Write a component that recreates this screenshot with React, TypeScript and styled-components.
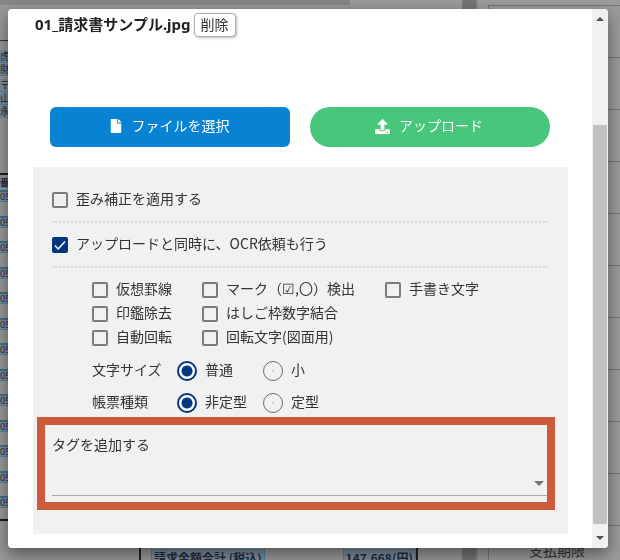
import React from "react";
import styled, { createGlobalStyle, css } from "styled-components";
import { FaFile, FaUpload } from "react-icons/fa";

const navy = "#003580";
const ink = "#333";

const GlobalStyle = createGlobalStyle`
  * { box-sizing: border-box; }
  body {
    margin: 0;
    overflow: hidden;
    background: #999;
    color: ${ink};
    font: 14px/20px "Noto Sans CJK JP", "Noto Sans", sans-serif;
  }
  button, input, select { font: inherit; color: inherit; margin: 0; }
`;

/* Page behind the dialog */
const Backdrop = styled.div`
  display: flex;
  height: 100vh;
  overflow: hidden;
  background: #9b9b9b;
`;

const Viewer = styled.div`
  flex: 1;
  min-width: 0;
  display: flex;
  flex-direction: column;
`;

const ViewerBar = styled.div`
  flex: none;
  height: 5px;
  border-right: 112px solid #9b9b9b;
  background: #868686;
`;

const Divider = styled.div`
  width: 14px;
  background: #757575;
`;

const SidePanel = styled.div`
  width: 144px;
  padding: 5px 0 0 10px;
  border-left: 2px solid #8a8a8a;
`;

const SideCells = styled.div`
  border: 1px solid #777;
  border-right: 0;
`;

const SideCell = styled.div`
  height: 52px;
  padding: 14px 0 0 40px;
  border-bottom: 1px solid #777;
  white-space: nowrap;
`;

const Paper = styled.div`
  flex: 1;
  display: flex;
  flex-direction: column;
  color: #222b3c;
  background: #989898;
`;

const Address = styled.div`
  height: 135px;
  margin-top: 35px;
  padding-top: 9px;
  border-top: 1px solid #333;
  border-bottom: 2px solid #1b1b1b;
  font-size: 10px;
  line-height: 12px;
`;

const AddressLine = styled.div`
  background: #7d8c9b;
  border-bottom: 1px solid #4a86a8;
  white-space: nowrap;
  &:nth-of-type(3) { margin-top: 3px; }
`;

const Lines = styled.div`
  display: flex;
  flex-direction: column;
  gap: 2px;
  padding: 3px 0 11px;
  height: 346px;
  border-bottom: 2px solid #1b1b1b;
`;

const LineHead = styled.div`
  flex: none;
  height: 10px;
  background: #7f8b96;
  font-size: 9px;
  line-height: 10px;
  font-weight: 700;
`;

const LineCodes = styled.div`
  flex: 1;
  display: flex;
  flex-direction: column;
  justify-content: space-between;
`;

const LineCode = styled.div`
  height: 12px;
  border-top: 2px solid #40718c;
  border-bottom: 1px solid #4a86a8;
  background: #7f8d9d;
  font: 9px/9px "Noto Sans", sans-serif;
`;

const Totals = styled.div`
  flex: 1;
  display: flex;
  align-items: flex-start;
  justify-content: space-between;
  margin: 0 44px 0 139px;
  padding: 28px 0 0 10px;
  border: solid #222;
  border-width: 0 2px;
  font-weight: 700;
  font-size: 12px;
  white-space: nowrap;
`;

const Mark = styled.span`
  height: 24px;
  padding: 0 2px;
  border: 1px solid #4a86a8;
  background: #808c99;
  line-height: 16px;
`;

/* Dialog */
const Dialog = styled.section`
  position: fixed;
  inset: 9px 12px 12px 8px;
  display: flex;
  overflow: hidden;
  border-radius: 4px;
  background: #fff;
  box-shadow: 0 6px 16px rgba(0, 0, 0, 0.45);
`;

const Content = styled.div`
  flex: 1;
  min-width: 0;
  padding: 4px 24px 14px 25px;
`;

const FileRow = styled.div`
  display: flex;
  align-items: center;
  gap: 3px;
  padding-left: 2px;
`;

const FileName = styled.h1`
  margin: 0;
  padding-bottom: 2px;
  color: #222;
  font: 700 15px/22px "Noto Sans", "Noto Sans CJK JP", sans-serif;
`;

const DeleteButton = styled.button`
  height: 24px;
  padding: 0 6px 2px;
  border: 1px solid #aaa;
  border-radius: 4px;
  background: #fff;
  box-shadow: 1px 1px 3px rgba(0, 0, 0, 0.25);
  line-height: 20px;
`;

const Actions = styled.div`
  display: flex;
  gap: 20px;
  margin: 70px 18px 20px 17px;
`;

const ActionButton = styled.button<{ $tone: "blue" | "green" }>`
  flex: 1;
  display: flex;
  align-items: center;
  justify-content: center;
  gap: 9px;
  height: 40px;
  padding: 0 2px 2px 0;
  border: 0;
  color: #fff;
  ${(p) =>
    p.$tone === "blue"
      ? css`background: #0882d3; border-radius: 6px;`
      : css`background: #48c77c; border-radius: 20px;`}
`;

const ChoiceText = styled.span`
  padding-bottom: 4px;
`;

const ActionText = styled.span`
  padding-bottom: 2px;
`;

const Options = styled.form`
  padding: 11px 0 24px;
  background: #f1f1f1;
`;

const OptionRow = styled.div`
  display: flex;
  align-items: center;
  height: 45px;
  margin: 0 20px 0 19px;
  border-bottom: 2px dotted #d9d9d9;
`;

const Choice = styled.label`
  display: flex;
  align-items: center;
  gap: 8px;
  white-space: nowrap;
`;

const CheckBox = styled.input.attrs({ type: "checkbox" })`
  appearance: none;
  flex: none;
  width: 16px;
  height: 16px;
  border: 2px solid #7c7c7c;
  border-radius: 2px;
  &:checked {
    border-color: ${navy};
    background: ${navy}
      url("data:image/svg+xml,%3Csvg xmlns='http://www.w3.org/2000/svg' viewBox='0 0 12 12'%3E%3Cpath d='M1 6.6 4.2 9.9 11 2.4' fill='none' stroke='white' stroke-width='1.5'/%3E%3C/svg%3E")
      center / 12px no-repeat;
  }
`;

const Radio = styled.input.attrs({ type: "radio" })`
  appearance: none;
  flex: none;
  width: 20px;
  height: 20px;
  border: 1px solid #6c6c6c;
  border-radius: 50%;
  background: radial-gradient(circle, #ccc 0 1px, transparent 1px);
  &:checked {
    border: 2px solid ${navy};
    background: radial-gradient(circle, ${navy} 0 5px, #fff 6px);
  }
`;

const CheckGrid = styled.div`
  display: grid;
  grid-template-columns: 110px 183px 1fr;
  grid-auto-rows: 24px;
  padding: 10px 20px 0 59px;
`;

const RadioRows = styled.div`
  display: grid;
  gap: 8px;
  padding: 9px 20px 2px 59px;
`;

const RadioRow = styled.div`
  display: grid;
  grid-template-columns: 85px 86px 1fr;
  align-items: center;
  height: 24px;
`;

const TagField = styled.div`
  display: flex;
  flex-direction: column;
  margin: 0 13px 0 4px;
  padding: 9px 0 6px 7px;
  border: 8px solid #cd5a3b;
`;

const TagSelectWrap = styled.div`
  display: grid;
  align-items: center;
  margin-top: 17px;
  > * { grid-area: 1 / 1; }
`;

const TagSelect = styled.select`
  appearance: none;
  width: 100%;
  height: 25px;
  border: 0;
  border-bottom: 1px solid #aaa;
  border-radius: 0;
  background: transparent;
`;

const Arrow = styled.svg`
  justify-self: end;
  margin-right: 3px;
  pointer-events: none;
`;

const ScrollTrack = styled.div`
  width: 16px;
  display: flex;
  flex-direction: column;
  align-items: center;
  background: #f1f1f1;
`;

const ScrollButton = styled.button`
  display: grid;
  place-items: center;
  width: 16px;
  height: 20px;
  padding: 0;
  border: 0;
  background: none;
`;

const ScrollThumb = styled.div`
  flex: 1;
  width: 14px;
  margin: 96px 0 4px;
  background: #c1c1c1;
`;

const Check = ({ label, checked }: { label: string; checked?: boolean }) => (
  <Choice>
    <CheckBox defaultChecked={checked} />
    <ChoiceText>{label}</ChoiceText>
  </Choice>
);

const RadioGroup = ({ name, title, options }: { name: string; title: string; options: string[] }) => (
  <RadioRow role="radiogroup" aria-label={title}>
    <ChoiceText>{title}</ChoiceText>
    {options.map((o, i) => (
      <Choice key={o}>
        <Radio name={name} defaultChecked={i === 0} />
        <ChoiceText>{o}</ChoiceText>
      </Choice>
    ))}
  </RadioRow>
);

export default function App() {
  return (
    <>
      <GlobalStyle />
      <Backdrop aria-hidden="true">
        <Viewer>
          <ViewerBar />
          <Paper>
            <Address>
              {["虎", "財", "〒9", "山", "永"].map((t) => (
                <AddressLine key={t}>{t}</AddressLine>
              ))}
            </Address>
            <Lines>
              <LineHead>番</LineHead>
              <LineCodes>
                {Array.from({ length: 13 }, (_, i) => (
                  <LineCode key={i}>050</LineCode>
                ))}
              </LineCodes>
            </Lines>
            <Totals>
              <Mark>請求金額合計 (税込)</Mark>
              <Mark>147,668(円)</Mark>
            </Totals>
          </Paper>
        </Viewer>
        <Divider />
        <SidePanel>
          <SideCells>
            {Array.from({ length: 10 }, (_, i) => (
              <SideCell key={i} />
            ))}
            <SideCell>支払期限</SideCell>
          </SideCells>
        </SidePanel>
      </Backdrop>

      <Dialog role="dialog" aria-label="アップロード">
        <Content>
          <FileRow>
            <FileName>01_請求書サンプル.jpg</FileName>
            <DeleteButton type="button">削除</DeleteButton>
          </FileRow>
          <Actions>
            <ActionButton type="button" $tone="blue">
              <FaFile size={14} />
              <ActionText>ファイルを選択</ActionText>
            </ActionButton>
            <ActionButton type="button" $tone="green">
              <FaUpload size={15} />
              <ActionText>アップロード</ActionText>
            </ActionButton>
          </Actions>
          <Options>
            <OptionRow>
              <Check label="歪み補正を適用する" />
            </OptionRow>
            <OptionRow>
              <Check label="アップロードと同時に、OCR依頼も行う" checked />
            </OptionRow>
            <CheckGrid>
              <Check label="仮想罫線" />
              <Check label="マーク（☑,〇）検出" />
              <Check label="手書き文字" />
              <Check label="印鑑除去" />
              <Check label="はしご枠数字結合" />
              <span />
              <Check label="自動回転" />
              <Check label="回転文字(図面用)" />
            </CheckGrid>
            <RadioRows>
              <RadioGroup name="size" title="文字サイズ" options={["普通", "小"]} />
              <RadioGroup name="form" title="帳票種類" options={["非定型", "定型"]} />
            </RadioRows>
            <TagField>
              <label htmlFor="tag">タグを追加する</label>
              <TagSelectWrap>
                <TagSelect id="tag" defaultValue="">
                  <option value="" />
                </TagSelect>
                <Arrow width="10" height="5" viewBox="0 0 10 5">
                  <path d="M0 0h10L5 5z" fill="#737373" />
                </Arrow>
              </TagSelectWrap>
            </TagField>
          </Options>
        </Content>
        <ScrollTrack>
          <ScrollButton type="button" aria-label="上へスクロール">
            <svg width="8" height="4" viewBox="0 0 8 4">
              <path d="M0 4h8L4 0z" fill="#505050" />
            </svg>
          </ScrollButton>
          <ScrollThumb />
          <ScrollButton type="button" aria-label="下へスクロール">
            <svg width="8" height="4" viewBox="0 0 8 4">
              <path d="M0 0h8L4 4z" fill="#505050" />
            </svg>
          </ScrollButton>
        </ScrollTrack>
      </Dialog>
    </>
  );
}
